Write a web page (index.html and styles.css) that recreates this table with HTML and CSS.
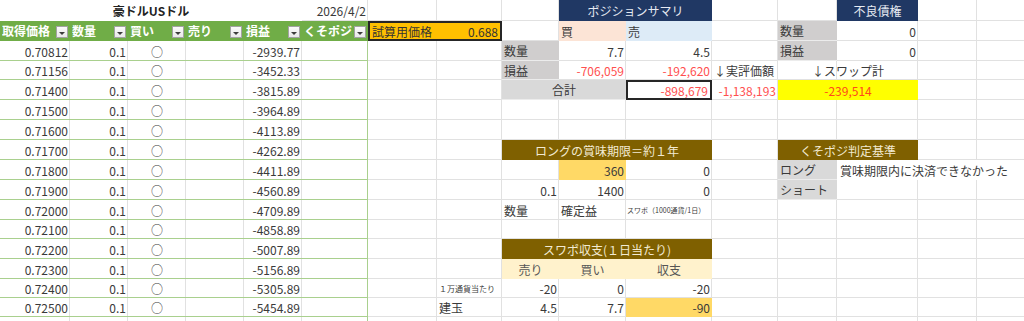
FILE: index.html
```html
<!DOCTYPE html>
<html lang="ja">
<head>
<meta charset="utf-8">
<title>豪ドルUSドル</title>
<link rel="stylesheet" href="styles.css">
</head>
<body>
<div class="sheet">
  <div class="row">
    <div class="cell cAE title">豪ドルUSドル</div>
    <div class="cell cF right">2026/4/2</div>
    <div class="cell cJK navy ctr">ポジションサマリ</div>
    <div class="cell cN navy ctr">不良債権</div>
  </div>
  <div class="row">
    <div class="cell cA hd"><span class="hd-t">取得価格</span><span class="fb"></span></div>
    <div class="cell cB hd"><span class="hd-t">数量</span><span class="fb"></span></div>
    <div class="cell cC hd"><span class="hd-t">買い</span><span class="fb"></span></div>
    <div class="cell cD hd"><span class="hd-t">売り</span><span class="fb"></span></div>
    <div class="cell cE hd"><span class="hd-t">損益</span><span class="fb"></span></div>
    <div class="cell cF hd"><span class="hd-t">くそポジ判定</span><span class="fb"></span></div>
    <div class="cell cGH trial"><span>試算用価格</span><span>0.688</span></div>
    <div class="cell cJ buy">買</div>
    <div class="cell cK sell">売</div>
    <div class="cell cM gray">数量</div>
    <div class="cell cN right">0</div>
  </div>
  <div class="row data">
    <div class="cell cA right">0.70812</div>
    <div class="cell cB right">0.1</div>
    <div class="cell cC ctr">○</div>
    <div class="cell cE right">-2939.77</div>
    <div class="cell cI gray">数量</div>
    <div class="cell cJ right">7.7</div>
    <div class="cell cK right">4.5</div>
    <div class="cell cM gray">損益</div>
    <div class="cell cN right">0</div>
  </div>
  <div class="row data">
    <div class="cell cA right">0.71156</div>
    <div class="cell cB right">0.1</div>
    <div class="cell cC ctr">○</div>
    <div class="cell cE right">-3452.33</div>
    <div class="cell cI gray">損益</div>
    <div class="cell cJ right red">-706,059</div>
    <div class="cell cK right red">-192,620</div>
    <div class="cell cL">↓実評価額</div>
    <div class="cell cMN ctr">↓スワップ計</div>
  </div>
  <div class="row data">
    <div class="cell cA right">0.71400</div>
    <div class="cell cB right">0.1</div>
    <div class="cell cC ctr">○</div>
    <div class="cell cE right">-3815.89</div>
    <div class="cell cIJ gray2 ctr">合計</div>
    <div class="cell cK right red boxed">-898,679</div>
    <div class="cell cL right red">-1,138,193</div>
    <div class="cell cMN ctr yellow">-239,514</div>
  </div>
  <div class="row data">
    <div class="cell cA right">0.71500</div>
    <div class="cell cB right">0.1</div>
    <div class="cell cC ctr">○</div>
    <div class="cell cE right">-3964.89</div>
  </div>
  <div class="row data">
    <div class="cell cA right">0.71600</div>
    <div class="cell cB right">0.1</div>
    <div class="cell cC ctr">○</div>
    <div class="cell cE right">-4113.89</div>
  </div>
  <div class="row data">
    <div class="cell cA right">0.71700</div>
    <div class="cell cB right">0.1</div>
    <div class="cell cC ctr">○</div>
    <div class="cell cE right">-4262.89</div>
    <div class="cell cIK brown ctr">ロングの賞味期限＝約１年</div>
    <div class="cell cMN brown ctr">くそポジ判定基準</div>
  </div>
  <div class="row data">
    <div class="cell cA right">0.71800</div>
    <div class="cell cB right">0.1</div>
    <div class="cell cC ctr">○</div>
    <div class="cell cE right">-4411.89</div>
    <div class="cell cJ right gold">360</div>
    <div class="cell cK right">0</div>
    <div class="cell cM gray2">ロング</div>
    <div class="cell cNP plain">賞味期限内に決済できなかった</div>
  </div>
  <div class="row data">
    <div class="cell cA right">0.71900</div>
    <div class="cell cB right">0.1</div>
    <div class="cell cC ctr">○</div>
    <div class="cell cE right">-4560.89</div>
    <div class="cell cI right">0.1</div>
    <div class="cell cJ right">1400</div>
    <div class="cell cK right">0</div>
    <div class="cell cM gray2">ショート</div>
  </div>
  <div class="row data">
    <div class="cell cA right">0.72000</div>
    <div class="cell cB right">0.1</div>
    <div class="cell cC ctr">○</div>
    <div class="cell cE right">-4709.89</div>
    <div class="cell cI">数量</div>
    <div class="cell cJ">確定益</div>
    <div class="cell cK tiny">スワポ（1000通貨/1日）</div>
  </div>
  <div class="row data">
    <div class="cell cA right">0.72100</div>
    <div class="cell cB right">0.1</div>
    <div class="cell cC ctr">○</div>
    <div class="cell cE right">-4858.89</div>
  </div>
  <div class="row data">
    <div class="cell cA right">0.72200</div>
    <div class="cell cB right">0.1</div>
    <div class="cell cC ctr">○</div>
    <div class="cell cE right">-5007.89</div>
    <div class="cell cIK brown ctr">スワポ収支(１日当たり)</div>
  </div>
  <div class="row data">
    <div class="cell cA right">0.72300</div>
    <div class="cell cB right">0.1</div>
    <div class="cell cC ctr">○</div>
    <div class="cell cE right">-5156.89</div>
    <div class="cell cI pale ctr">売り</div>
    <div class="cell cJ pale ctr">買い</div>
    <div class="cell cK pale ctr">収支</div>
  </div>
  <div class="row data">
    <div class="cell cA right">0.72400</div>
    <div class="cell cB right">0.1</div>
    <div class="cell cC ctr">○</div>
    <div class="cell cE right">-5305.89</div>
    <div class="cell cH small">１万通貨当たり</div>
    <div class="cell cI right">-20</div>
    <div class="cell cJ right">0</div>
    <div class="cell cK right">-20</div>
  </div>
  <div class="row data">
    <div class="cell cA right">0.72500</div>
    <div class="cell cB right">0.1</div>
    <div class="cell cC ctr">○</div>
    <div class="cell cE right">-5454.89</div>
    <div class="cell cH">建玉</div>
    <div class="cell cI right">4.5</div>
    <div class="cell cJ right">7.7</div>
    <div class="cell cK right gold">-90</div>
  </div>
  <div class="row data"></div>
</div>
</body>
</html>
```

FILE: styles.css
```css
:root {
  --g: #e1e1e1;
  --gl: #a9d08e;
  --vl: linear-gradient(to right,
    transparent 69px, var(--g) 69px 70px,
    transparent 70px 127px, var(--g) 127px 128px,
    transparent 128px 185px, var(--g) 185px 186px,
    transparent 186px 243px, var(--g) 243px 244px,
    transparent 244px 301px, var(--g) 301px 302px,
    transparent 302px 367px, var(--g) 367px 368px,
    transparent 368px 436px, var(--g) 436px 437px,
    transparent 437px 501px, var(--g) 501px 502px,
    transparent 502px 558px, var(--g) 558px 559px,
    transparent 559px 625px, var(--g) 625px 626px,
    transparent 626px 711px, var(--g) 711px 712px,
    transparent 712px 777px, var(--g) 777px 778px,
    transparent 778px 836px, var(--g) 836px 837px,
    transparent 837px 917px, var(--g) 917px 918px,
    transparent 918px 976px, var(--g) 976px 977px,
    transparent 977px);
}

* {
  box-sizing: border-box;
}

html, body {
  margin: 0;
  padding: 0;
  background: #ffffff;
}

body {
  font-family: "Noto Sans CJK JP", "Noto Sans", sans-serif;
  font-size: 12px;
  color: #3a3a3a;
  overflow: hidden;
}

.sheet {
  width: 1024px;
  height: 321px;
  overflow: hidden;
  display: grid;
  grid-template-rows: 21px 20px 20px 19px 20px 20px 20px 20px 20px 20px 20px 19px 20px 20px 19px 19px 20px;
}

.row {
  display: grid;
  grid-template-columns: 70px 58px 58px 58px 58px 66px 69px 65px 57px 67px 86px 66px 59px 81px 59px 47px;
  background:
    linear-gradient(var(--g), var(--g)) 0 100% / 100% 1px no-repeat,
    var(--vl);
}

.row.data {
  background:
    linear-gradient(var(--gl), var(--gl)) 367px 0 / 1px 100% no-repeat,
    linear-gradient(var(--gl), var(--gl)) 0 100% / 368px 1px no-repeat,
    linear-gradient(var(--g), var(--g)) 0 100% / 100% 1px no-repeat,
    var(--vl);
}

.cell {
  display: flex;
  align-items: center;
  padding: 0 2px;
  white-space: nowrap;
  overflow: hidden;
  min-width: 0;
  line-height: 17px;
}

.right { justify-content: flex-end; }
.ctr { justify-content: center; }

.cA { grid-column: 1; }
.cB { grid-column: 2; }
.cC { grid-column: 3; }
.cD { grid-column: 4; }
.cE { grid-column: 5; }
.cF { grid-column: 6; }
.cH { grid-column: 8; }
.cI { grid-column: 9; }
.cJ { grid-column: 10; }
.cK { grid-column: 11; }
.cL { grid-column: 12; }
.cM { grid-column: 13; }
.cN { grid-column: 14; }
.cAE { grid-column: 1 / 6; }
.cGH { grid-column: 7 / 9; }
.cIJ { grid-column: 9 / 11; }
.cIK { grid-column: 9 / 12; }
.cJK { grid-column: 10 / 12; }
.cMN { grid-column: 13 / 15; }
.cNP { grid-column: 14 / 17; }

.title {
  justify-content: center;
  font-weight: bold;
  background: #ffffff;
  color: #222222;
}

.hd {
  background: #70ad47;
  color: #ffffff;
  font-weight: bold;
  padding: 0 2px;
  gap: 2px;
}

.hd-t {
  flex: 1 1 auto;
  min-width: 0;
  overflow: hidden;
  line-height: 18px;
}

.fb {
  flex: none;
  width: 12px;
  height: 12px;
  margin-top: 2px;
  border: 1px solid #a3a3a3;
  background: linear-gradient(#fbfbfb, #e9e9e9);
  display: flex;
  align-items: center;
  justify-content: center;
  padding-top: 2px;
}

.fb::after {
  content: "";
  border-left: 3px solid transparent;
  border-right: 3px solid transparent;
  border-top: 3px solid #3c3c3c;
}

.trial {
  background: #ffc000;
  border: 2px solid #262626;
  justify-content: space-between;
  color: #333333;
}

.navy {
  background: #203864;
  color: #e6eaf2;
}

.brown {
  background: #7f6000;
  color: #f2ead2;
}

.buy { background: #fce4d6; }
.sell { background: #ddebf7; }

.gray {
  background: #d0cece;
  border-bottom: 1px solid #ececec;
}

.gray2 {
  background: #d9d9d9;
  border-bottom: 1px solid #ececec;
}

.red { color: #ff4f4f; }

.boxed {
  background: #ffffff;
  border: 2px solid #262626;
}

.yellow {
  background: #ffff00;
  color: #ff4a1a;
}

.gold { background: #ffd966; }

.pale {
  background: #fff2cc;
  color: #555555;
}

.plain {
  background: #ffffff;
  padding-left: 3px;
}

.tiny {
  font-size: 7px;
  padding-left: 1px;
}

.small {
  font-size: 8px;
  padding-left: 2px;
}
```
